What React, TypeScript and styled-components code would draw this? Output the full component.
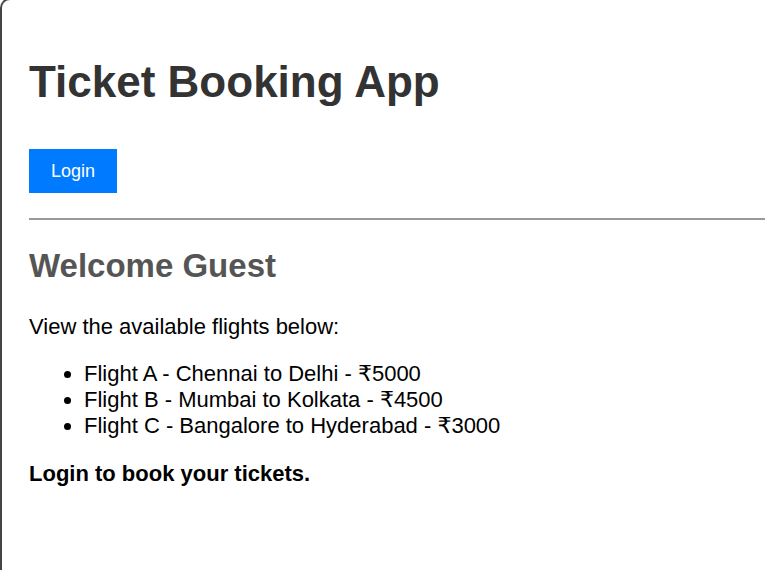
import React from "react";
import styled, { createGlobalStyle } from "styled-components";

const GlobalStyle = createGlobalStyle`
  html, body {
    margin: 0;
    padding: 0;
    background: #ffffff;
    overflow: hidden;
  }
  body {
    font-family: "Liberation Sans", Arial, "DejaVu Sans", sans-serif;
  }
`;

const Frame = styled.div`
  margin-top: -2px;
  min-height: 620px;
  box-sizing: border-box;
  border: 2px solid #444;
  border-right: none;
  border-radius: 10px 0 0 10px;
  padding: 28px 0 0 27px;
  font-size: 22px;
  color: #000;
`;

const Title = styled.h1`
  font-size: 44px;
  font-weight: bold;
  color: #333;
  margin: 29px 0 42px;
`;

const LoginButton = styled.button`
  display: block;
  font-family: "Liberation Sans", Arial, sans-serif;
  font-size: 18px;
  color: #fff;
  background: #007bff;
  border: none;
  border-radius: 0;
  padding: 12px 22px 11px;
  cursor: pointer;
`;

const Divider = styled.hr`
  border: none;
  border-top: 2px solid #999;
  margin: 25px 0 0;
`;

const Welcome = styled.h2`
  font-size: 33px;
  font-weight: bold;
  color: #555;
  margin: 27px 0 29px;
`;

const Text = styled.p`
  margin: 22px 0 0;
`;

const FlightList = styled.ul`
  margin: 21px 0 22px;
  padding-left: 55px;
  line-height: 26px;
`;

const Flight = styled.li``;

const flights = [
  "Flight A - Chennai to Delhi - ₹5000",
  "Flight B - Mumbai to Kolkata - ₹4500",
  "Flight C - Bangalore to Hyderabad - ₹3000",
];

export default function App() {
  return (
    <>
      <GlobalStyle />
      <Frame>
        <Title>Ticket Booking App</Title>
        <LoginButton>Login</LoginButton>
        <Divider />
        <Welcome>Welcome Guest</Welcome>
        <Text>View the available flights below:</Text>
        <FlightList>
          {flights.map((f) => (
            <Flight key={f}>{f}</Flight>
          ))}
        </FlightList>
        <Text>
          <strong>Login to book your tickets.</strong>
        </Text>
      </Frame>
    </>
  );
}
